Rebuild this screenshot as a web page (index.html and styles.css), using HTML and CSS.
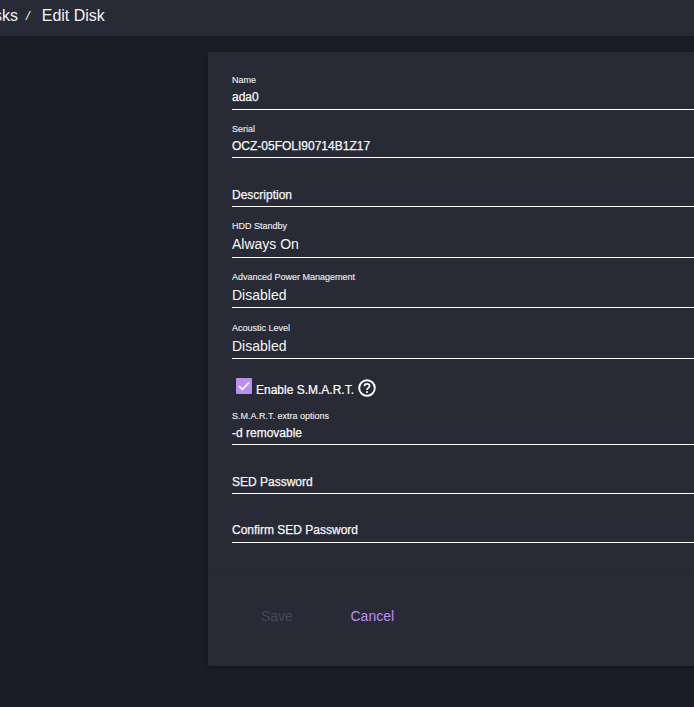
FILE: index.html
```html
<!DOCTYPE html>
<html lang="en">
<head>
<meta charset="utf-8">
<title>Edit Disk</title>
<link rel="stylesheet" href="styles.css">
</head>
<body>
<header class="topbar">
  <span class="crumb">Disks</span><span class="sep">/</span><span class="current">Edit Disk</span>
</header>
<main class="content">
  <section class="card">
    <form class="form">
      <div class="field h-49 raised"><label class="label">Name</label><div class="value">ada0</div></div>
      <div class="field h-48"><label class="label">Serial</label><div class="value">OCZ-05FOLI90714B1Z17</div></div>
      <div class="field h-49"><div class="value">Description</div></div>
      <div class="field h-51 select"><label class="label">HDD Standby</label><div class="value">Always On</div></div>
      <div class="field h-50 select low"><label class="label">Advanced Power Management</label><div class="value">Disabled</div></div>
      <div class="field h-51 select low"><label class="label">Acoustic Level</label><div class="value">Disabled</div></div>
      <div class="check-row">
        <span class="box"><svg width="16" height="16" viewBox="0 0 16 16"><path d="M3 8.2 6.4 11.4 13 4.6" fill="none" stroke="#fff" stroke-width="1.7"/></svg></span>
        <span class="check-label">Enable S.M.A.R.T.</span>
        <svg class="help" width="18" height="18" viewBox="0 0 18 18"><circle cx="9" cy="9" r="7.8" fill="none" stroke="#fff" stroke-width="1.9"/><path d="M6.4 7.2c0-1.5 1.1-2.4 2.6-2.4s2.6.9 2.6 2.2c0 1.9-2.6 2-2.6 4" fill="none" stroke="#fff" stroke-width="1.7"/><rect x="8.1" y="12.2" width="1.8" height="1.7" fill="#fff"/></svg>
      </div>
      <div class="field h-49"><label class="label">S.M.A.R.T. extra options</label><div class="value">-d removable</div></div>
      <div class="field h-49"><div class="value">SED Password</div></div>
      <div class="field h-49 raised"><div class="value">Confirm SED Password</div></div>
    </form>
    <footer class="actions">
      <button class="btn save" type="button" disabled>Save</button>
      <button class="btn cancel" type="button">Cancel</button>
    </footer>
  </section>
</main>
</body>
</html>
```
FILE: styles.css
```css
* { box-sizing: border-box; }
html, body { margin: 0; height: 100%; overflow: hidden; }
body {
  background: #1a1c27;
  color: #fff;
  font-family: "Liberation Sans", Arial, sans-serif;
  width: 694px;
  height: 707px;
}
.topbar {
  height: 36px;
  background: #282a36;
  display: flex;
  align-items: center;
  margin-left: -21px;
  white-space: nowrap;
  font-size: 16px;
  padding-bottom: 5px;
  color: #f2f2f2;
}
.sep { margin: 0 12px 0 8px; font-size: 13px; font-style: italic; }
.content { padding: 16px 0 0 208px; }
.card {
  width: 500px;
  height: 614px;
  background: #282a36;
  border-radius: 2px;
  box-shadow: 0 2px 4px rgba(0,0,0,.25);
}
.form { height: 523px; padding: 9px 0 0 24px; border-bottom: 1px solid #242631; }
.field {
  border-bottom: 1px solid #fff;
  display: flex;
  flex-direction: column;
  justify-content: flex-end;
}
.h-48 { height: 48px; }
.h-49 { height: 49px; }
.h-50 { height: 50px; }
.h-51 { height: 51px; }
.label { font-size: 9px; line-height: 11px; color: #e8e8e8; margin-bottom: 4px; -webkit-text-stroke: 0.15px #e8e8e8; }
.value { font-size: 12px; line-height: 14px; padding-bottom: 4px; color: #f6f6f6; -webkit-text-stroke: 0.25px #f6f6f6; }
.select .value { font-size: 14px; line-height: 16px; padding-bottom: 5px; -webkit-text-stroke: 0; }
.select.low .value { padding-bottom: 4px; }
.raised .value { padding-bottom: 5px; }
.check-row { height: 37px; display: flex; align-items: flex-start; padding-top: 19px; }
.box { width: 16px; height: 16px; margin: 0 4px; background: #b98ff3; border-radius: 1px; display: block; flex: none; }
.box svg { display: block; }
.check-label { font-size: 12px; line-height: 14px; margin-top: 5px; -webkit-text-stroke: 0.2px #fff; }
.help { margin: 1px 0 0 4px; }
.actions { display: flex; padding: 33px 0 0 53px; }
.btn { background: none; border: 0; padding: 0; font: inherit; font-size: 14px; line-height: 16px; }
.save { color: #45475f; width: 89.5px; text-align: left; }
.cancel { color: #b98ff3; }
```
